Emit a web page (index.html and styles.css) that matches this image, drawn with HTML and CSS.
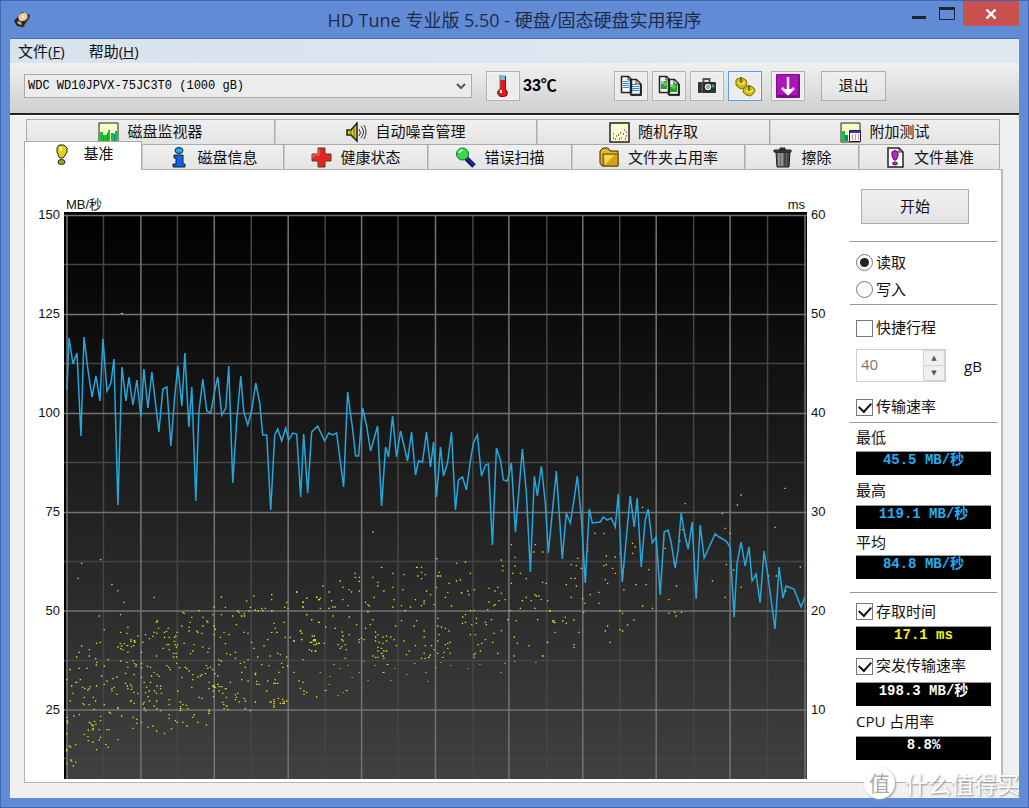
FILE: index.html
```html
<!DOCTYPE html>
<html lang="zh-CN">
<head>
<meta charset="utf-8">
<meta name="viewport" content="width=device-width, initial-scale=1">
<title>HD Tune 专业版 5.50 - 硬盘/固态硬盘实用程序</title>
<link rel="stylesheet" href="styles.css">
</head>
<body>
<div class="window">
  <header class="titlebar">
    <svg class="app-icon" viewBox="0 0 20 18" aria-hidden="true"><path d="M2 10 10 1l8 3-7 12-6-1z" fill="#26231f"/><path d="M11 16 18 4v3l-7 10-6-2z" fill="#5b5045"/><ellipse cx="11" cy="6" rx="5" ry="4" transform="rotate(-30 11 6)" fill="#e8c795"/><circle cx="11" cy="6" r="1.5" fill="#fff3d7"/><path d="m5 10 4 1 1 3-4-1z" fill="#cbb18d"/></svg>
    <h1 class="title">HD Tune 专业版 5.50 - 硬盘/固态硬盘实用程序</h1>
    <div class="window-buttons">
      <button class="win-btn" aria-label="最小化"><svg viewBox="0 0 14 3" width="14" height="3"><path d="M0 0h14v3H0z" fill="#1c2533"/></svg></button>
      <button class="win-btn win-max" aria-label="最大化"><svg viewBox="0 0 16 13" width="16" height="13"><path d="M.5.5h15v12H.5z" fill="none" stroke="#1c2533"/><path d="M0 0h16v3H0z" fill="#1c2533"/></svg></button>
      <button class="win-btn win-close" aria-label="关闭"><svg viewBox="0 0 12 10" width="12" height="10"><path d="m1.500 .5 9 9m0-9-9 9" stroke="#fff" stroke-width="2.400"/></svg></button>
    </div>
  </header>
  <div class="client">
    <nav class="menubar">
      <button class="menu-item">文件(<u>F</u>)</button>
      <button class="menu-item">帮助(<u>H</u>)</button>
    </nav>
    <div class="toolbar">
      <select class="drive" aria-label="硬盘"><option>WDC WD10JPVX-75JC3T0 (1000 gB)</option></select>
      <button class="tool" aria-label="温度"><svg viewBox="0 0 22 24" width="22" height="24"><path d="M9 2h5v13l2 3-1 4-3 1H8l-3-3 1-4 3-2z" fill="#8a1010"/><path d="M8 1h5v6H8z" fill="#6fc3cf"/><path d="M8 6h5v10H8z" fill="#e31818"/><circle cx="10.500" cy="18" r="4" fill="#e31818"/><path d="M8 1v14l-3 3 2 4" fill="none" stroke="#777"/><path d="M9 16v3" stroke="#fff" stroke-width="2"/></svg></button>
      <span class="temperature">33℃</span>
      <div class="tool-group">
        <button class="tool" aria-label="复制文本"><svg viewBox="0 0 22 22" width="22" height="22"><path d="M1.500 1.500h7l3 3v13h-10zM10.500 4.500h6l4 4v11h-10z" fill="#f8fbff" stroke="#222" stroke-width="1.500"/><path d="M8 2v3h3m5 0v4h4" fill="none" stroke="#333"/><path d="M21.500 9v11.500H11" fill="none" stroke="#333"/><path d="M3 6.500h5M3 8.500h6M3 10.500h6M3 12.500h6M12 9.500h4M12 11.500h7M12 13.500h7M12 15.500h7" stroke="#3186dc"/></svg></button>
        <button class="tool" aria-label="复制图像"><svg viewBox="0 0 22 22" width="22" height="22"><path d="M1.500 1.500h7l3 3v13h-10zM10.500 4.500h6l4 4v11h-10z" fill="#f8fbff" stroke="#222" stroke-width="1.500"/><path d="M8 2v3h3m5 0v4h4" fill="none" stroke="#333"/><path d="M21.500 9v11.500H11" fill="none" stroke="#333"/><path d="M3 6h6v8H3zM12 9h7v8h-7z" fill="#2e9c25"/><path d="M3 6h3v3H3zM12 9h4v3h-4z" fill="#82c7e9"/><circle cx="7" cy="9" r="2" fill="#55d52e"/><circle cx="16" cy="12" r="2" fill="#55d52e"/></svg></button>
        <button class="tool" aria-label="屏幕截图"><svg viewBox="0 0 22 22" width="22" height="22"><path d="M7.500 7V4h6v3" fill="none" stroke="#555" stroke-width="2"/><rect x="2" y="7" width="18" height="11" rx="1" fill="#303234"/><path d="M6 7v11" stroke="#667"/><circle cx="12" cy="12" r="4" fill="#ddd" stroke="#111"/><circle cx="12" cy="12" r="2" fill="#9aa"/><circle cx="17" cy="11" r="1.500" fill="#1ec94a"/></svg></button>
        <button class="tool tool-active" aria-label="选项"><svg viewBox="0 0 22 22" width="22" height="22"><g fill="#c9bd16" stroke="#7b700c"><path d="m2 5 2-2 2 1 2-1 2 1 2 1 1 3-1 3-2 2-3 1-3-2-2-2z"/><path d="m10 13 2-2 3 0 2 0 3 2 1 3-2 3-3 2-4-1-3-3z"/></g><path d="M7 2v6M15 10v6" stroke="#746a12" stroke-width="2"/><path d="M4 7q3 4 7 0M12 15q3 4 7 0" fill="none" stroke="#eee34e" stroke-width="2"/></svg></button>
      </div>
      <button class="tool" aria-label="更新"><svg viewBox="0 0 24 24" width="24" height="24"><rect width="24" height="24" rx="1" fill="#7b0d8c"/><path d="M1 1h21v20H1z" fill="#b012bd"/><path d="M12 3v14M6 14l6 6 6-6" fill="none" stroke="#fff" stroke-width="2.500"/><path d="m8 15 4 5 4-5z" fill="#fff"/></svg></button>
      <button class="text-btn exit">退出</button>
    </div>
    <main class="content">
      <div class="tabs" role="tablist">
        <div class="tab-row tab-row-back">
          <button class="tab" role="tab"><svg class="tab-icon" viewBox="0 0 21 21"><path d="M1 1h19v19H1z" fill="#fdfbc9" stroke="#222"/><path d="M2 10h3v9H2zM6 13h3v6H6zM10 8h2v11h-2zM13 11h3v8h-3zM17 9h2v10h-2z" fill="#13c52c"/><path d="M5 13h1v6H5zM9 11h1v8H9zM16 12h1v7h-1z" fill="#1a74c8"/></svg>磁盘监视器</button>
          <button class="tab" role="tab"><svg class="tab-icon" viewBox="0 0 21 21"><path d="M1 8h4l6-7v18l-6-6H1z" fill="#d8cf1c" stroke="#222" stroke-width="1.500"/><path d="M5 8v5M8 5v10" stroke="#6f690d"/><path d="M13 7q3 4 0 7M15 4q5 6 0 12M18 3q4 7 0 14" fill="none" stroke="#333"/></svg>自动噪音管理</button>
          <button class="tab" role="tab"><svg class="tab-icon" viewBox="0 0 21 21"><path d="M1 1h19v19H1z" fill="#fffbd0" stroke="#222" stroke-width="1.500"/><path d="M4 12h1M7 14h1M11 11h1M15 8h1M12 16h1M17 14h1M6 17h1" stroke="#e33" stroke-width="1.500"/><path d="M4 16h1M9 13h1M14 12h1M17 10h1M10 17h1M16 17h1" stroke="#24b" stroke-width="1.500"/></svg>随机存取</button>
          <button class="tab" role="tab"><svg class="tab-icon" viewBox="0 0 21 21"><path d="M1 1h19v19H1z" fill="#fdfbc9" stroke="#222"/><path d="M2 9h3v10H2z" fill="#13c52c"/><path d="M5 13h3v6H5z" fill="#1a74c8"/><path d="M9.500 8.500h11v11h-11z" fill="#fff" stroke="#222"/><path d="M10 9h10v2H10z" fill="#2a3cc0"/><path d="M12 13h1m2 0h1m2 0h1m-7 2h1m2 0h1m2 0h1m-7 2h1m2 0h1m2 0h1" stroke="#b14"/></svg>附加测试</button>
        </div>
        <div class="tab-row tab-row-front">
          <button class="tab tab-selected" role="tab" aria-selected="true"><svg class="tab-icon" viewBox="0 0 21 21"><path d="M7 1h5l3 3v4l-3 5-1 1H8l-1-1-2-5V4z" fill="#d8d51c" stroke="#222"/><path d="M8 3h2v4H8z" fill="#fffcae"/><ellipse cx="9.500" cy="18" rx="3.500" ry="2.500" fill="#a9a512" stroke="#222"/></svg>基准</button>
          <button class="tab" role="tab"><svg class="tab-icon" viewBox="0 0 21 21"><ellipse cx="11" cy="3.500" rx="4" ry="3" fill="#27a8ee" stroke="#123"/><path d="M6 8h9v9h2v3H5v-3h3v-6H6z" fill="#1260ed" stroke="#122"/></svg>磁盘信息</button>
          <button class="tab" role="tab"><svg class="tab-icon" viewBox="0 0 21 21"><path d="M7 1h7v6h6v7h-6v6H7v-6H1V7h6z" fill="#e42427" stroke="#541"/><path d="M8 2v6H2v3" fill="none" stroke="#ff7b70"/></svg>健康状态</button>
          <button class="tab" role="tab"><svg class="tab-icon" viewBox="0 0 21 21"><path d="m11 11 8 8" stroke="#10105b" stroke-width="5"/><path d="m12 11 7 7" stroke="#1d29b8" stroke-width="2"/><circle cx="7.500" cy="7" r="6" fill="#36d948" stroke="#263"/><path d="M4 6q1-3 4-3" fill="none" stroke="#b7ffb4" stroke-width="2"/></svg>错误扫描</button>
          <button class="tab" role="tab"><svg class="tab-icon" viewBox="0 0 21 21"><path d="M1 4 4 1h5l2 3h8v15H3l-2-3z" fill="#e0b62d" stroke="#332805"/><path d="M4 7h15v12H4z" fill="#d1a417" stroke="#654b08"/><path d="M5 8h10L6 18z" fill="#f5d65a"/></svg>文件夹占用率</button>
          <button class="tab" role="tab"><svg class="tab-icon" viewBox="0 0 21 21"><path d="M4 5h14l-1 15H5z" fill="#686868" stroke="#181818"/><path d="M2 3h17v2H2zM8 1h5v2H8z" fill="#555" stroke="#181818"/><path d="M7 6v13M10 6v13" stroke="#bbb"/><path d="M13 6v13M16 6v13" stroke="#222"/></svg>擦除</button>
          <button class="tab" role="tab"><svg class="tab-icon" viewBox="0 0 21 21"><path d="M3 1h11l4 4v15H3z" fill="#fff" stroke="#222" stroke-width="1.500"/><path d="M14 1v4h4" fill="none" stroke="#222"/><path d="M7 5q3-3 6 0v4l-2 4H9L7 9z" fill="#c124cf" stroke="#414"/><ellipse cx="10" cy="16.500" rx="2.500" ry="1.500" fill="#c124cf" stroke="#414"/></svg>文件基准</button>
        </div>
      </div>
      <section class="panel">
        <div class="chart">
          <div class="units"><span>MB/秒</span><span>ms</span></div>
          <div class="axis axis-left"><span>150</span><span>125</span><span>100</span><span>75</span><span>50</span><span>25</span></div>
          <svg class="plot" viewBox="64 212 744 567" preserveAspectRatio="none" role="img" aria-label="传输速率和存取时间">
            <defs><linearGradient id="shade" x1="0" y1="0" x2="0" y2="1"><stop offset="0" stop-color="#000"/><stop offset="1" stop-color="#404040"/></linearGradient></defs>
            <path d="M64 212h744v567H64z" fill="url(#shade)"/>
            <path d="M64 212h743v3H64zM64 212h2v567h-2z" fill="#000"/>
            <path class="grid-minor" d="M103.500 215v564M177.500 215v564M251.500 215v564M325.500 215v564M398.500 215v564M473.500 215v564M547.500 215v564M620.500 215v564M694.500 215v564M768.500 215v564M64 264.500h743M64 363.500h743M64 462.500h743M64 561.500h743M64 660.500h743M64 758.500h743"/>
            <path class="grid-major" d="M67 215v564M141 215v564M214.500 215v564M288.500 215v564M362 215v564M436 215v564M509.500 215v564M583.500 215v564M657 215v564M731 215v564M806 215v564M64 215.500h744M64 314.500h744M64 413.500h744M64 512.500h744M64 611h744M64 710h744"/>
            <g class="access">
              <path transform="translate(30 520) scale(.3333)" d="M210 119h4M153 130h4M142 175h4M244 194h4M262 212h4M281 247h4M371 232h4M206 288h4M270 284h4M221 329h4M292 322h4M209 367h4M198 370h4M153 378h4M176 389h4M146 397h4M176 408h4M138 411h4M195 416h4M198 427h4M197 435h4M233 419h4M221 438h4M118 449h5M146 445h4M169 445h4M108 479h4M136 487h6M149 479h4M123 498h4M156 502h4M163 506h4M172 510h4M179 500h4M176 506h4M198 498h4M213 468h4M221 493h4M229 483h4M247 476h4M259 471h4M244 506h4M251 502h4M244 512h4M259 523h4M127 520h4M119 543h4M161 532h4M188 532h4M157 550h4M160 554h4M195 543h4M176 554h4M190 568h4M221 554h4M262 563h4M262 566h4M236 577h5M240 580h4M273 588h4M146 584h4M130 588h4M109 592h4M109 603h5M110 609h5M108 641h4M176 607h4M180 610h4M184 615h4M192 604h4M188 617h4M196 613h4M210 589h4M210 602h4M187 625h5M187 630h4M206 629h4M173 630h4M161 643h4M172 650h4M173 662h4M187 666h4M210 652h4M206 660h4M229 629h4M236 629h4M262 659h4M226 674h4M233 682h4M198 689h4M135 674h4M116 678h4M120 681h4M108 693h4M120 720h4M123 724h4M108 731h4M135 727h4M128 738h4M108 688h4"/>
              <path transform="translate(30 520) scale(.3333)" d="M270 337h4M289 340h4M262 381h4M269 371h4M273 378h4M270 386h4M277 389h4M281 371h4M290 377h5M292 397h4M301 359h4M301 364h4M303 380h4M311 362h5M312 366h5M310 377h4M322 348h4M345 344h4M357 356h4M371 337h4M380 303h5M378 307h4M384 325h4M379 340h4M367 349h4M402 337h4M408 334h4M413 325h4M402 352h4M416 352h4M398 385h4M409 374h4M416 389h4M432 352h4M436 348h4M440 337h4M434 374h4M441 374h4M415 374h4M432 364h4M438 381h4M429 400h4M437 400h4M429 411h4M438 411h4M439 430h4M447 443h4M378 408h4M337 367h4M333 397h4M270 423h4M289 427h4M308 422h4M312 431h4M317 434h4M316 439h4M333 443h4M333 431h4M292 442h4M285 460h4M311 464h4M333 472h4M351 439h4M360 442h4M371 457h4M363 468h4M380 464h4M386 469h4M409 437h4M415 442h4M419 449h4M341 487h4M360 487h4M285 490h4M290 498h4M300 494h4M304 500h4M303 508h4M292 506h4M310 517h4M322 520h4M348 502h4M356 513h4M345 518h4M372 513h4M379 498h4M390 498h4M390 506h4M393 520h4M378 520h4M352 530h4M357 543h4M300 543h6M311 550h4M338 552h4M341 565h5M345 572h4M341 547h4M378 543h4M371 558h4M379 566h4M390 572h4M308 592h4M319 598h4M319 610h4M333 607h4M308 625h4M352 622h4M367 618h4M378 633h4M402 640h4M423 626h4M440 607h4M435 602h4M416 584h4M416 595h4M457 607h4M469 618h4M487 592h4M491 585h4M502 607h4M528 615h4M534 580h6M536 569h4M536 574h4M468 556h4M457 554h4M450 566h5M416 554h4M450 546h4M450 572h4M416 539h4M472 566h4M450 560h4M506 532h4M514 535h4M442 513h4M484 502h4M454 472h4M464 442h5M469 446h4M476 453h4M487 464h4M480 401h4M487 393h4M461 370h4M491 374h4M487 479h4M502 471h4M510 468h4M514 464h4M525 461h4M528 437h4M532 445h4M540 442h4M536 487h4M536 385h4M532 397h4M517 381h4M536 506h4"/>
              <path transform="translate(30 520) scale(.3333)" d="M457 277h4M461 280h4M506 272h4M484 292h4M454 318h4M476 322h4M476 333h4M479 307h4M499 333h4M502 337h4M517 318h4M514 340h4M518 292h4M529 303h4M532 307h4M551 261h4M573 231h4M585 262h4M573 284h4M547 284h4M551 318h4M554 328h5M551 344h4M581 337h4M570 352h4M596 344h4M585 371h4M607 288h4M618 314h4M622 273h4M626 277h4M633 288h5M641 281h4M642 288h5M649 243h4M656 273h4M660 262h4M671 228h4M675 270h4M684 273h4M694 265h4M697 272h5M705 265h4M724 224h4M724 239h4M724 273h5M769 247h4M763 262h4M773 265h4M799 216h4M829 235h4M818 247h4M818 261h4M859 231h4M865 239h4M829 284h4M844 299h4M865 307h4M761 307h4M731 310h4M735 325h4M724 337h4M740 337h4M641 337h4M653 340h4M664 367h4M671 385h4M701 378h4M712 359h4M739 337h4M765 352h4M780 352h4M791 363h4M810 333h4M814 340h4M814 359h4M840 367h4M852 348h4M849 362h6M854 359h5M857 374h4M865 370h4M844 393h4M855 393h4M589 401h4M600 404h4M615 397h4M615 415h4M566 420h4M573 423h4M566 434h4M554 461h4M562 468h4M547 449h4M630 430h4M641 427h4M653 419h4M645 442h4M634 457h4M634 479h4M653 483h4M675 460h5M675 464h4M679 484h4M679 493h4M686 493h4M682 411h4M694 434h4M720 408h4M742 400h4M750 404h4M769 411h4M754 430h4M758 442h4M772 438h4M746 457h4M716 437h4M735 479h4M742 490h4M735 490h4M712 483h4M709 513h4M731 490h4M547 498h8M551 502h7M562 493h5M566 500h4M573 500h5M585 506h6M600 487h4M549 513h4M549 530h4M566 513h4M577 520h4M588 532h4M577 547h4M580 554h4M588 558h5M581 566h4M592 568h4M615 524h4M622 520h4M618 532h4M615 539h4M626 546h4M645 543h4M645 566h4M641 535h4M660 572h4M675 546h4M720 546h6M731 539h4M731 545h5M731 551h4M731 557h4M731 562h4M744 535h4M757 538h4M750 550h4M757 550h4M761 545h5M762 550h4M769 543h4M806 483h4M818 487h4M810 505h4M821 513h4M829 517h4M821 523h4M859 531h4M818 419h4M791 457h4"/>
              <path transform="translate(290 360) scale(.3333)" d="M248 516h4M274 622h4M98 678h4M150 663h4M195 640h4M195 652h4M207 652h4M207 664h4M248 652h4M263 667h4M263 678h4M158 682h4M177 689h4M184 696h4M207 693h4M252 712h4M281 693h4M308 640h4M308 682h4M342 644h4M379 622h6M394 622h4M394 637h4M383 648h4M394 656h4M405 644h4M439 596h5M447 637h4M443 648h6M451 648h4M477 670h4M499 610h4M526 606h4M499 663h4M511 660h4M541 640h4M439 682h4M409 693h4M338 689h4M421 704h4M466 712h4M473 697h4M514 699h5M533 693h4M536 704h4M553 689h4M597 685h4M634 600h4M638 618h4M638 632h4M664 554h4M736 554h4M732 576h4M758 576h4M675 592h4M668 640h4M675 618h4M691 640h4M664 670h4M709 656h4M721 625h4M758 667h4M769 670h4M623 682h4M615 693h4M597 726h4M612 737h4M615 734h4M627 722h4M634 700h4M645 719h4M697 722h4M709 712h4M724 722h4M735 704h4M739 708h4M747 708h4M754 719h4M773 722h4M735 745h4M691 745h4M660 752h4M792 782h4M795 788h4M780 752h4M743 779h4M679 782h4M653 779h4M593 749h4M541 752h4M552 752h4M526 764h4M518 771h4M559 775h4M559 790h4M545 794h4M586 787h4M604 779h4M589 794h4M612 820h4M634 812h4M541 824h4M556 824h4M517 790h4M526 787h4M673 831h4M717 857h4M772 847h4M682 850h4M758 888h4M672 888h4M623 880h4M608 847h4M586 839h4M575 850h4M564 854h4M571 873h4M556 880h4M552 884h4M552 892h4M19 696h4M38 726h4M49 715h4M79 712h4M87 719h4M90 715h4M116 696h4M124 722h4M116 745h5M128 741h4M135 741h4M158 719h4M173 737h4M226 727h4M233 734h4M237 738h4M233 756h4M248 779h4M240 794h4M226 805h4M199 794h4M177 771h4M128 768h4M87 787h4M64 779h4M49 764h4M38 741h4M90 745h4M106 801h4M135 805h4M31 812h4M34 820h4M34 839h4M11 843h4M66 828h4M71 839h6M75 843h4M64 847h4M79 850h4M86 850h5M102 850h4M57 869h4M76 873h4M71 854h4M156 816h4M158 828h4M154 839h5M158 843h4M143 854h4M154 860h4M150 865h4M165 854h4M168 869h4M165 895h4M177 824h4M207 839h4M207 847h4M214 835h4M222 839h4M256 816h4M256 831h4M263 824h4M278 831h4M289 828h4M302 831h4M289 843h4M256 843h4M267 847h4M278 850h4M312 839h4M319 857h4M263 862h4M263 873h4M274 865h4M274 880h5M281 873h4M289 873h4M248 888h4M256 892h4M263 892h4M278 888h5M281 895h4M308 741h4M312 719h4M334 737h4M361 741h4M345 752h4M334 782h4M379 782h4M372 798h4M316 798h4M402 813h4M402 831h4M402 723h4M402 730h4M394 737h4M376 719h4M432 734h4M484 738h4M443 775h4M443 798h4M454 801h4M466 805h4M477 813h4M447 824h4M443 843h4M466 854h4M480 847h4M473 850h4M473 865h4M462 877h4M480 880h4M458 892h4M443 880h4M424 857h4M405 857h4M376 857h4M342 843h4M357 873h4M349 884h4M402 880h4M415 892h6M420 885h4M394 895h4M405 895h4M432 869h4"/>
              <path transform="translate(540 420) scale(.3333)" d="M308 262h4M436 251h4M604 225h4M593 255h4M736 205h4M548 281h4M556 325h4M706 322h4M571 340h4M165 340h4M192 340h4M428 329h4M435 345h4M372 359h4M420 363h4M143 374h4M143 385h4M143 393h4M278 370h4M286 381h4M278 400h4M376 385h4M199 408h4M226 411h4M241 401h4M403 430h4M560 434h4M582 450h4M710 468h4M687 468h4M782 441h4M518 483h4M604 502h4M738 513h4M556 532h4M113 415h4M94 434h4M109 437h4M124 445h4M192 437h4M199 434h4M218 445h4M226 460h4M251 442h4M327 449h4M94 475h4M105 475h4M79 494h4M109 498h4M196 479h4M203 490h4M252 509h4M289 494h4M319 494h4M410 498h4M387 539h4M94 532h4M151 524h4M177 517h4M128 536h4M135 550h4M177 550h4M308 558h4M338 565h4M387 580h4M405 577h4M409 588h4M425 577h4M240 573h4M248 580h4M131 577h4M31 573h4M38 603h4M41 607h4M45 637h4M68 603h4M76 592h4M79 610h4M102 600h4M117 637h4M102 674h4M102 682h4M196 633h4M203 618h4M211 667h4M241 629h4M248 633h4M263 615h4M282 600h4M23 667h4M8 708h4"/>
              <path d="M121 313.500h2M338 695.500h1M343 692.500h1M346 690.500h2M330 676.500h1M359 672.500h1M368 680.500h1M383 672.500h2M391 680.500h1M407 674.500h1M426 672.500h1M451 665.500h1M468 668.500h1M480 664.500h1M325 690.500h2M340 668.500h1M415 663.500h1M428 681.500h1M501 672.500h1M505 663.500h1M515 661.500h1M536 662.500h1M329 684.500h1M334 664.500h1M352 677.500h1M375 665.500h1M395 668.500h1M364 661.500h1M387 664.500h2M436 667.500h1M441 662.500h1M320 672.500h1M348 665.500h1"/>
            </g>
            <polyline class="rate" points="67,390 69,338 73,364 77,353 81,436 84,337 88,370 92,397 96,376 100,401 103,339 107,391 111,383 114,359 118,505 122,367 126,401 129,377 133,405 137,380 141,417 144,369 148,408 152,372 159,432 163,389 167,387 171,446 175,395 178,366 182,406 185,353 189,427 192,387 196,501 199,413 203,379 207,411 211,413 215,390 218,377 222,415 226,408 229,366 233,483 237,420 241,376 244,412 248,425 252,410 256,383 260,403 263,435 267,435 271,510 275,435 278,429 282,441 286,428 289,440 293,433 297,434 301,497 304,434 308,493 312,432 318,426 325,441 329,433 333,435 337,433 341,464 344,487 348,392 353,429 356,456 359,456 363,408 367,426 371,451 378,426 382,506 386,447 389,457 393,416 397,457 401,431 408,461 412,432 416,475 419,461 423,462 427,432 431,467 434,442 437,497 441,447 444,476 448,463 452,432 456,510 459,480 463,477 467,490 471,460 474,443 478,435 482,476 486,465 489,464 493,545 497,448 501,460 504,480 508,481 512,463 516,532 523,449 527,493 531,572 535,476 538,496 542,466 546,503 549,553 557,471 563,559 567,513 571,523 575,498 578,476 582,517 586,583 590,509 593,523 601,522 604,517 608,520 612,518 616,527 619,494 623,582 631,496 635,527 638,498 642,567 646,520 649,509 653,543 657,537 661,595 665,532 669,530 672,543 676,568 679,550 682,513 686,537 689,549 693,522 697,599 701,525 705,558 716,534 720,537 727,541 731,547 735,617 738,563 742,542 746,566 750,547 753,581 757,574 761,603 765,551 768,570 776,629 780,567 784,598 787,586 795,589 802,607 806,597"/>
          </svg>
          <div class="axis axis-right"><span>60</span><span>50</span><span>40</span><span>30</span><span>20</span><span>10</span></div>
        </div>
        <aside class="sidebar">
          <button class="text-btn start">开始</button>
          <div class="group modes">
            <label class="option"><input type="radio" name="mode" checked>读取</label>
            <label class="option"><input type="radio" name="mode">写入</label>
          </div>
          <div class="group stroke">
            <label class="option"><input type="checkbox">快捷行程</label>
            <div class="spin-row">
              <div class="spinner"><input id="stroke" class="spin-value" type="text" value="40" disabled><div class="spin-buttons"><button disabled aria-label="增加">▲</button><button disabled aria-label="减少">▼</button></div></div>
              <label for="stroke">gB</label>
            </div>
            <label class="option"><input type="checkbox" checked>传输速率</label>
          </div>
          <div class="group rates">
            <div class="caption">最低</div><output class="readout">45.5 MB/秒</output>
            <div class="caption caption-tall">最高</div><output class="readout">119.1 MB/秒</output>
            <div class="caption caption-short">平均</div><output class="readout">84.8 MB/秒</output>
          </div>
          <div class="group others">
            <label class="option"><input type="checkbox" checked>存取时间</label><output class="readout yellow">17.1 ms</output>
            <label class="option"><input type="checkbox" checked>突发传输速率</label><output class="readout white">198.3 MB/秒</output>
            <div class="caption caption-tall">CPU 占用率</div><output class="readout white">8.8%</output>
          </div>
        </aside>
      </section>
    </main>
  </div>
  <div class="watermark"><span class="seal">值</span><span>什么值得买</span></div>
</div>
</body>
</html>
```
FILE: styles.css
```css
* { box-sizing: border-box; }
body { margin: 0; font: 15px/20px "Liberation Sans", "Noto Sans CJK SC", sans-serif; color: #111; }
button, input, select { font: inherit; color: inherit; margin: 0; }
button { padding: 0; }
svg { display: block; }

.window { position: relative; display: flex; flex-direction: column; min-height: 100vh; padding: 0 9px 9px; border: 1px solid #3f66b0; background: #628bd5; }
.titlebar { display: grid; grid-template-columns: 112px 1fr 112px; height: 37px; align-items: center; }
.app-icon { width: 20px; height: 18px; margin-left: 2px; }
.title { margin: 0; text-align: center; font: 18px/22px "Open Sans", "Noto Sans CJK SC", sans-serif; color: #1d2c49; white-space: nowrap; }
.window-buttons { display: flex; align-self: start; justify-content: flex-end; }
.win-btn { display: flex; justify-content: center; align-items: center; width: 28px; height: 25px; border: 0; background: none; }
.win-btn:first-child { padding-top: 8px; }
.win-max { width: 36px; }
.win-close { flex: none; width: 56px; background: #c8504f; }

.client { flex: 1; display: flex; flex-direction: column; border-top: 1px solid #4d70b4; background: #f0f0f0; }
.menubar { display: flex; gap: 24px; height: 24px; padding-left: 8px; background: linear-gradient(90deg, #d9e3ed, #e1e8f2); }
.menu-item { border: 0; background: none; font: 15px/24px "Open Sans", "Noto Sans CJK SC", sans-serif; }
.toolbar { display: flex; align-items: center; height: 52px; padding: 0 133px 4px 14px; border-bottom: 2px solid #222; background: linear-gradient(#f1f1f1, #cfcfcf); }
.drive { flex: 1; min-width: 0; height: 24px; padding: 0 3px; border: 1px solid #aaa; border-radius: 0; appearance: none; font: 12px/20px "Liberation Mono", monospace; color: #000; background: #ececec url("data:image/svg+xml,%3Csvg xmlns='http://www.w3.org/2000/svg' width='10' height='7'%3E%3Cpath d='m1 1 4 4 4-4' fill='none' stroke='%23555' stroke-width='2'/%3E%3C/svg%3E") right 5px center no-repeat; }
.tool { flex: none; display: flex; justify-content: center; align-items: center; width: 34px; height: 30px; border: 1px solid #b2b2b2; background: #ececec; box-shadow: inset 0 0 0 1px #f3f3f3; }
.drive + .tool { margin-left: 14px; }
.tool-active { border-color: #569de5; }
.temperature { flex: none; width: 94px; padding-left: 3px; font: bold 16px/20px "Liberation Sans", "Noto Sans CJK SC", sans-serif; color: #000; }
.tool-group { display: flex; gap: 4px; margin-right: 9px; }
.text-btn { border: 1px solid #adadad; background: linear-gradient(#f0f0f0, #e3e3e3); }
.exit { flex: none; width: 65px; height: 30px; margin-left: 16px; }

.content { flex: 1; display: flex; flex-direction: column; padding: 3px 16px 15px 14px; border-top: 1px solid #fff; }
.tabs { padding: 0 3px 0 2px; }
.tab-row { display: grid; height: 25px; }
.tab-row-back { grid-template-columns: 249fr 262fr 233fr 230fr; }
.tab-row-front { grid-template-columns: 116fr 142fr 144fr 144fr 173fr 114fr 141fr; }
.tab { display: flex; align-items: center; justify-content: center; gap: 8px; border: 1px solid #acacac; border-width: 1px 1px 0; background: linear-gradient(#f0f0f0, #e4e4e4); white-space: nowrap; }
.tab + .tab { border-left-color: #ccc; }
.tab-icon { flex: none; width: 21px; height: 21px; }
.tab-selected { position: relative; z-index: 1; gap: 10px; height: 29px; margin: -3px 0 0 -2px; padding: 0 0 4px; background: #fff; }
.panel { flex: 1; display: flex; padding-right: 4px; border: 1px solid #b4b4b4; border-right: 2px solid #bbb; background: #fff; }

.chart { flex: 1; min-width: 0; display: grid; grid-template-columns: 39px 1fr 43px; grid-template-rows: 42px 1fr; padding-bottom: 3px; font: 13px/18px "Liberation Sans", "Noto Sans CJK SC", sans-serif; }
.units { grid-column: 2; display: flex; justify-content: space-between; align-items: end; padding: 0 2px; line-height: 14px; }
.plot { grid-row: 2; grid-column: 2; width: 100%; height: 100%; }
.axis { grid-row: 2; display: grid; grid-template-rows: repeat(5, 99fr) 72fr; margin: -6px 0 6px; }
.axis-left { grid-column: 1; padding-right: 4px; text-align: right; }
.axis-right { grid-column: 3; padding-left: 4px; }
.grid-major { fill: none; stroke: #737373; stroke-width: 1.5; }
.grid-minor { fill: none; stroke: #454545; stroke-width: 1.5; }
.rate { fill: none; stroke: #25a7dc; stroke-width: 1.5; }
.access path { fill: none; stroke: #dede22; stroke-width: 4; }
.access path:last-child { stroke-width: 1; }

.sidebar { flex: none; width: 147px; padding-top: 19px; }
.start { display: block; width: 108px; height: 35px; margin: 0 0 17px 11px; }
.group { padding: 0 6px; border-top: 1px solid #999; }
.modes { height: 63px; padding-top: 7px; }
.stroke { height: 118px; padding-top: 10px; }
.rates { height: 170px; }
.others { padding-top: 4px; }
.option { display: flex; align-items: center; gap: 3px; height: 27px; white-space: nowrap; }
.option input { appearance: none; flex: none; display: grid; place-items: center; width: 17px; height: 17px; border: 1px solid #777; background: #fff; }
.option input[type="radio"] { border-radius: 50%; }
.option input[type="radio"]:checked::before { content: ""; width: 9px; height: 9px; border-radius: 50%; background: #222; }
.option input[type="checkbox"]:checked::before { content: ""; width: 6px; height: 10px; margin-bottom: 3px; border: solid #111; border-width: 0 2px 2px 0; transform: rotate(42deg); }
.stroke .option { height: 26px; }
.spin-row { display: flex; align-items: center; gap: 18px; margin: 8px 0 12px; font-family: "Open Sans", sans-serif; }
.spinner { display: flex; width: 90px; height: 33px; border: 1px solid #ccc; }
.spin-value { flex: 1; min-width: 0; padding: 0 4px 3px; border: 0; background: #fff; color: #777; }
.spin-buttons { display: grid; width: 22px; padding: 1px; gap: 1px; background: #d6d6d6; }
.spin-buttons button { border: 1px solid #eee; background: #f0f0f0; font: 7px/10px "DejaVu Sans", sans-serif; color: #555; }
.caption { height: 28px; line-height: 28px; font-family: "Open Sans", "Noto Sans CJK SC", sans-serif; white-space: nowrap; }
.caption-tall { height: 30px; line-height: 30px; }
.caption-short { height: 26px; line-height: 26px; }
.readout { display: block; height: 24px; border-top: 1px solid #999; background: #000; color: #23aef1; font: bold 14px/16px "Liberation Mono", "Noto Sans CJK SC", monospace; text-align: center; }
.others .option { height: 32px; }
.others .option:first-child { height: 29px; }
.yellow { color: #f3f31d; }
.white { color: #fff; }

.watermark { position: absolute; right: 8px; bottom: 8px; display: flex; align-items: center; gap: 10px; font: 23px/32px "Noto Sans CJK SC", sans-serif; color: #fff; text-shadow: 1px 1px 2px #888; }
.seal { width: 31px; height: 32px; border-radius: 50%; background: #fff; text-align: center; font-size: 21px; line-height: 31px; color: #aaa; box-shadow: 1px 1px 2px #999; text-shadow: none; }
```
